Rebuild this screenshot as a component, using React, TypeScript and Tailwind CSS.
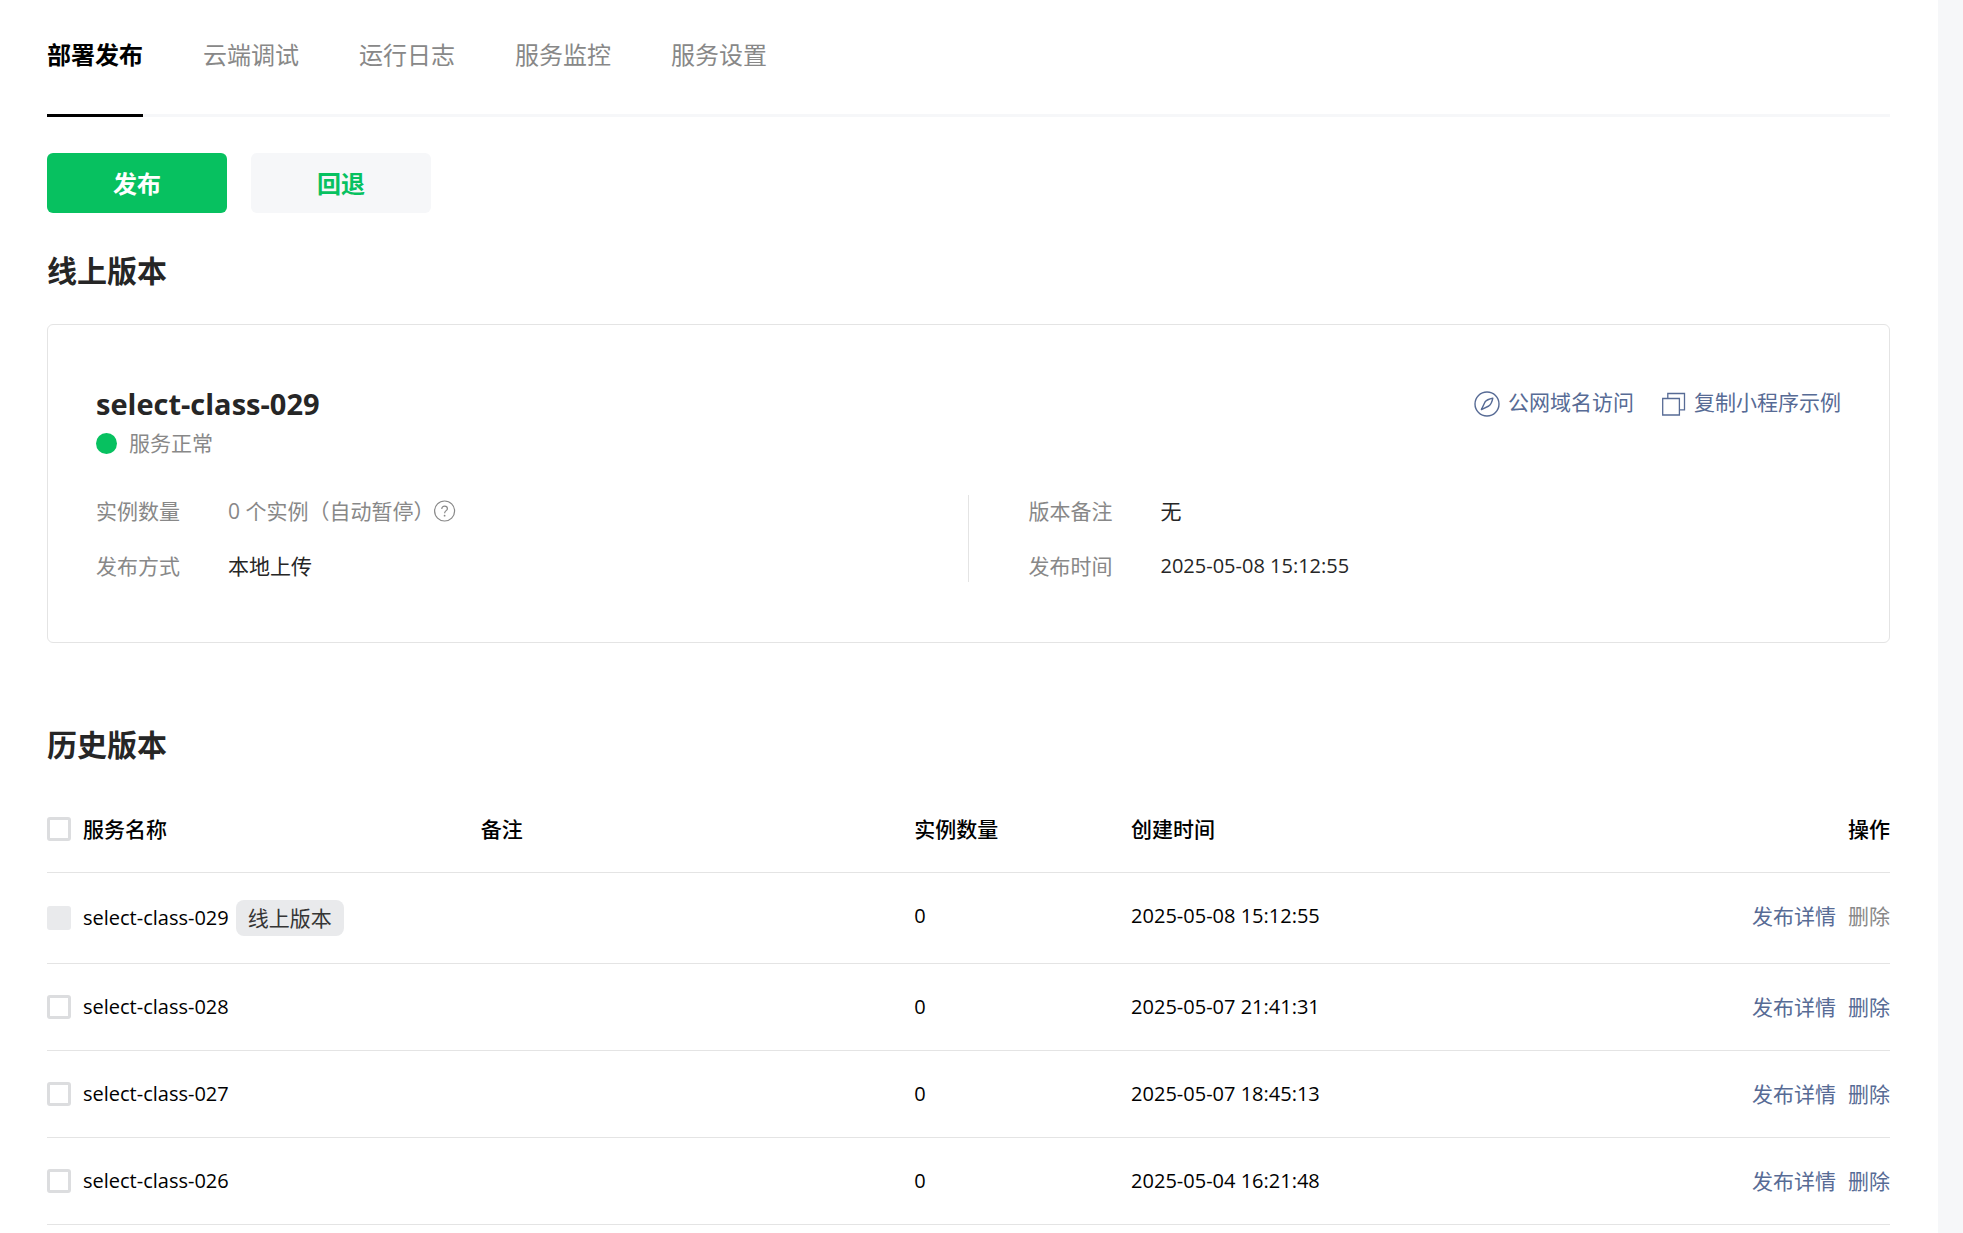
import { useState } from 'react';
import type { ReactNode } from 'react';

const tabs = ['部署发布', '云端调试', '运行日志', '服务监控', '服务设置'];

const versions = [
  { name: 'select-class-029', count: 0, created: '2025-05-08 15:12:55', online: true },
  { name: 'select-class-028', count: 0, created: '2025-05-07 21:41:31', online: false },
  { name: 'select-class-027', count: 0, created: '2025-05-07 18:45:13', online: false },
  { name: 'select-class-026', count: 0, created: '2025-05-04 16:21:48', online: false },
];

const checkboxClass =
  'size-6 shrink-0 appearance-none rounded-[3px] border-3 border-[#dcdddf] bg-white checked:border-[#07c160] checked:bg-[#07c160] disabled:border-[#e9eaec] disabled:bg-[#e9eaec]';

const cellClass = 'py-[27px]';

function CompassIcon() {
  return (
    <svg className="mt-1 size-[26px]" viewBox="0 0 26 26" fill="none" stroke="currentColor" strokeWidth="1.4" aria-hidden="true">
      <circle cx="13" cy="13" r="12" />
      <path d="M18.8 7.2C15.4 7.8 12.2 9.2 11 11L7.4 18.6L14.8 15C16.8 13.6 18.2 10.6 18.8 7.2Z" strokeLinejoin="round" />
    </svg>
  );
}

function CopyIcon() {
  return (
    <svg className="mt-1 size-6" viewBox="0 0 24 24" fill="none" stroke="currentColor" strokeWidth="1.3" aria-hidden="true">
      <path d="M0.7 6.5H17.4V23H0.7Z" />
      <path d="M5.8 6.5V1.5H22.5V17.8H17.4" />
    </svg>
  );
}

function HelpIcon() {
  return (
    <svg className="size-[22px]" viewBox="0 0 22 22" fill="none" stroke="currentColor" strokeWidth="1.2" aria-hidden="true">
      <circle cx="10.6" cy="11" r="10" />
      <path d="M7.8 8.9C7.8 7.2 9 6.1 10.6 6.1S13.4 7.2 13.4 8.7C13.4 10.6 10.6 10.8 10.6 13.2" />
      <circle cx="10.6" cy="15.7" r="0.9" fill="currentColor" stroke="none" />
    </svg>
  );
}

function Field({ label, children }: { label: string; children: ReactNode }) {
  return (
    <div className="flex items-center gap-12">
      <dt className="text-[#888]">{label}</dt>
      <dd className="flex items-center">{children}</dd>
    </div>
  );
}

export default function App() {
  const [selected, setSelected] = useState<string[]>([]);
  const selectable = versions.filter((v) => !v.online).map((v) => v.name);

  const toggle = (name: string) => {
    setSelected(selected.includes(name) ? selected.filter((n) => n !== name) : [...selected, name]);
  };

  return (
    <div className="min-h-screen bg-[#f6f7f9] pr-[25px] font-['Open_Sans','Noto_Sans_CJK_SC',sans-serif] text-[21px] leading-8 text-black">
      <main className="min-h-screen bg-white pr-12 pl-[47px]">
        <nav className="flex gap-15 border-b-3 border-[#f6f7f9] pt-[37px] text-2xl leading-9">
          {tabs.map((tab, index) => (
            <a
              key={tab}
              href="#"
              className={index === 0 ? '-mb-[3px] border-b-3 border-black pb-[41px] font-bold' : 'pb-[41px] text-[#888]'}
            >
              {tab}
            </a>
          ))}
        </nav>

        <div className="mt-9 flex gap-6 text-2xl font-bold">
          <button type="button" className="h-15 w-45 rounded-md bg-[#07c160] pt-[2px] text-white">发布</button>
          <button type="button" className="h-15 w-45 rounded-md bg-[#f6f7f9] pt-[2px] text-[#07c160]">回退</button>
        </div>

        <h2 className="mt-9 text-3xl leading-11 font-bold text-[#262626]">线上版本</h2>

        <section className="mt-[31px] rounded-md border border-[#e4e4e4] px-12 pt-[61px] pb-15">
          <div className="flex items-start justify-between">
            <h3 className="text-[29px] leading-9 font-bold text-[#262626]">select-class-029</h3>
            <div className="flex gap-7 text-[#576b95]">
              <a href="#" className="flex items-center gap-2">
                <CompassIcon />
                公网域名访问
              </a>
              <button type="button" className="flex items-center gap-2">
                <CopyIcon />
                复制小程序示例
              </button>
            </div>
          </div>

          <p className="mt-[5px] flex items-center gap-3 text-[#888]">
            <span className="size-[21px] rounded-full bg-[#07c160]" />
            服务正常
          </p>

          <dl className="mt-9 grid grid-cols-2 text-[#262626]">
            <div className="space-y-[23px] border-r border-[#e4e4e4]">
              <Field label="实例数量">
                <span className="text-[#888]">0 个实例（自动暂停）</span>
                <button type="button" aria-label="实例数量说明" className="text-[#888]">
                  <HelpIcon />
                </button>
              </Field>
              <Field label="发布方式">本地上传</Field>
            </div>
            <div className="space-y-[23px] pl-15">
              <Field label="版本备注">无</Field>
              <Field label="发布时间">
                <time className="text-xl leading-8">2025-05-08 15:12:55</time>
              </Field>
            </div>
          </dl>
        </section>

        <h2 className="mt-20 text-3xl leading-11 font-bold text-[#262626]">历史版本</h2>

        <table className="mt-5 w-full table-fixed text-left">
          <thead>
            <tr className="h-[85px] border-b border-[#e4e4e4]">
              <th className="w-4/17 font-medium">
                <label className="flex items-center gap-3">
                  <input
                    type="checkbox"
                    className={checkboxClass}
                    checked={selected.length === selectable.length}
                    onChange={(e) => setSelected(e.target.checked ? selectable : [])}
                  />
                  服务名称
                </label>
              </th>
              <th className="w-4/17 font-medium">备注</th>
              <th className="w-2/17 font-medium">实例数量</th>
              <th className="w-4/17 font-medium">创建时间</th>
              <th className="text-right font-medium">操作</th>
            </tr>
          </thead>
          <tbody className="align-top">
            {versions.map((version) => (
              <tr key={version.name} className="border-b border-[#e4e4e4]">
                <td className={cellClass}>
                  <label className="flex items-center">
                    <input
                      type="checkbox"
                      className={checkboxClass}
                      disabled={version.online}
                      checked={selected.includes(version.name)}
                      onChange={() => toggle(version.name)}
                    />
                    <span className="ml-3 text-xl leading-8">{version.name}</span>
                    {version.online && (
                      <span className="ml-[7px] rounded-lg bg-[#e9eaec] px-3 leading-9 text-[#353535]">线上版本</span>
                    )}
                  </label>
                </td>
                <td />
                <td className={`${cellClass} text-xl leading-8`}>{version.count}</td>
                <td className={`${cellClass} text-xl leading-8`}>{version.created}</td>
                <td className={cellClass}>
                  <div className="flex justify-end gap-3 text-[#576b95]">
                    <a href="#">发布详情</a>
                    <button type="button" className="disabled:text-[#888]" disabled={version.online}>删除</button>
                  </div>
                </td>
              </tr>
            ))}
          </tbody>
        </table>
      </main>
    </div>
  );
}
